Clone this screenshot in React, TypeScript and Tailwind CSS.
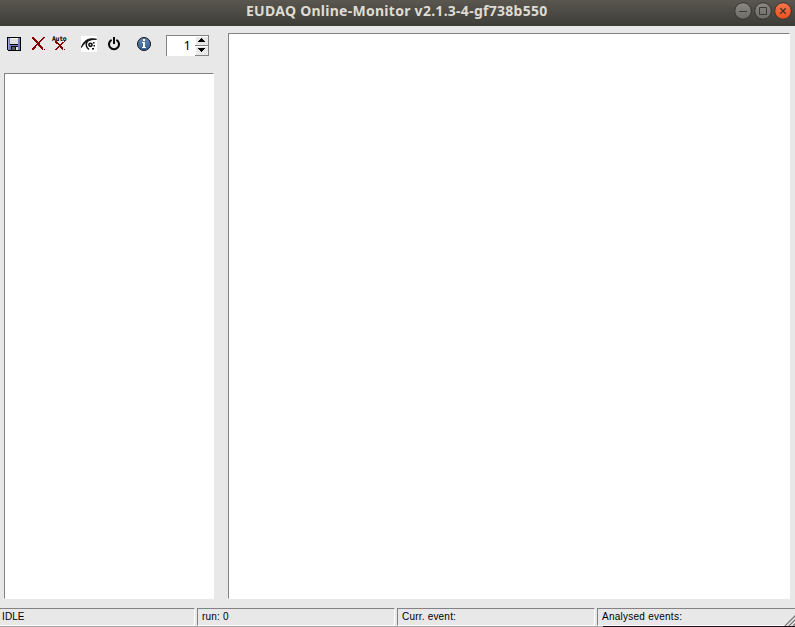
import React from "react";

function PixelArt({ rows, color }: { rows: string[]; color: string }) {
  const width = rows[0].length;
  return (
    <svg width={width} height={rows.length} viewBox={`0 0 ${width} ${rows.length}`} shapeRendering="crispEdges">
      {rows.map((row, y) =>
        [...row].map((cell, x) => (cell === "x" ? <rect key={`${x}-${y}`} x={x} y={y} width="1" height="1" fill={color} /> : null)),
      )}
    </svg>
  );
}

const CROSS = [
  "xx.........xx",
  "xxx.......xx.",
  ".xxx.....xx..",
  "..xxx...xx...",
  "...xxx.xx....",
  "....xxxx.....",
  ".....xxx.....",
  "....xxxx.....",
  "...xx.xxx....",
  "..xx...xxx...",
  ".xxx....xxx..",
  "xxx......xx..",
  "xx........x.x",
];

const SMALL_CROSS = [
  "xx.......x",
  "xxx....xx.",
  ".xxx..xx..",
  "...xxxx...",
  "....xx....",
  "...xxxx...",
  "..xx.xxx..",
  ".xx...xx..",
  "xx.....x.x",
];

function FloppyIcon() {
  return (
    <svg width="14" height="14" viewBox="0 0 14 14" shapeRendering="crispEdges">
      <path d="M0 0h14v14H1v-1H0z" fill="#000" />
      <path d="M1 1h2v7h8V1h2v12H1z" fill="#7478bd" />
      <path d="M1 1h1v11H1z" fill="#a0a3d8" />
      <path d="M3 1h8v6H3z" fill="#dededc" />
      <path d="M3 1h8v1H3z" fill="#f4f4f2" />
      <path d="M4 9h7v4H4z" fill="#111" />
      <path d="M9 10h2v3H9z" fill="#e4e4e0" />
      <path d="M5 10h3v3H5z" fill="#55585c" />
    </svg>
  );
}

function EyeIcon() {
  return (
    <svg width="16" height="16" viewBox="0 0 16 16" fill="none">
      <path d="M0 0h16v16H0z" fill="#fff" />
      <path d="M.3 11.500C2.500 4.800 7.500 1.300 15.500 3.300C9 3 4 6 .3 11.500z" fill="#111" stroke="#111" strokeWidth="1" />
      <path d="M6.300 5.500C4.600 8.500 5 11.800 8 13.300" stroke="#111" strokeWidth="1.500" />
      <circle cx="9.500" cy="8.800" r="1.600" stroke="#111" strokeWidth="1.600" />
      <path d="M12 6h1.500v1.500H12zM12.500 9h1.500v1.500h-1.500zM11 12h2v1.500h-2z" fill="#111" />
    </svg>
  );
}

function PowerIcon() {
  return (
    <svg width="12" height="14" viewBox="0 0 12 14" fill="none" stroke="#080808">
      <path d="M3.600 2.800A5 5 0 1 0 8.400 2.800" strokeWidth="2" />
      <path d="M6 0v7" strokeWidth="2" />
    </svg>
  );
}

function InfoIcon() {
  return (
    <svg width="14" height="14" viewBox="0 0 14 14">
      <defs>
        <linearGradient id="info" x1="0" y1="0" x2="0" y2="1">
          <stop offset="0" stopColor="#6785b0" />
          <stop offset="1" stopColor="#365f98" />
        </linearGradient>
      </defs>
      <circle cx="7" cy="7" r="6.500" fill="url(#info)" stroke="#10151d" />
      <path d="M6 2h2v2H6zM5 5h3v5h1v1H5v-1h1V6H5z" fill="#fff" shapeRendering="crispEdges" />
    </svg>
  );
}

function WindowButton({ kind }: { kind: "min" | "max" | "close" }) {
  const close = kind === "close";
  return (
    <svg width="18" height="18" viewBox="0 0 18 18" fill="none">
      <defs>
        <linearGradient id={kind} x1="0" y1="0" x2="0" y2="1">
          <stop offset="0" stopColor={close ? "#f4764d" : "#8b8981"} />
          <stop offset="1" stopColor={close ? "#e9511f" : "#6c6b65"} />
        </linearGradient>
      </defs>
      <circle cx="9" cy="9" r="8.300" fill={`url(#${kind})`} stroke="#35342f" />
      {kind === "min" && <path d="M5 9.500h8" stroke="#3c3b37" />}
      {kind === "max" && <path d="M5.500 5.500h7v7h-7z" stroke="#3c3b37" />}
      {close && <path d="M6.300 6.300l5.400 5.400M11.700 6.300l-5.400 5.400" stroke="#453027" strokeWidth="1.300" />}
    </svg>
  );
}

function TitleBar() {
  return (
    <header className="flex h-[26px] shrink-0 bg-linear-to-b from-[#59574f] to-[#3d3c37]">
      <h1 className="w-[734px] shrink-0 pl-[246px] font-['Noto_Sans','Open_Sans',sans-serif] text-[14px] leading-[22px] font-bold tracking-[0.27px] whitespace-nowrap text-[#dfdbd2]">
        EUDAQ Online-Monitor v2.1.3-4-gf738b550
      </h1>
      <div className="flex gap-[2px] pt-[2px]">
        <WindowButton kind="min" />
        <WindowButton kind="max" />
        <WindowButton kind="close" />
      </div>
    </header>
  );
}

function SpinButton({ down = false }: { down?: boolean }) {
  return (
    <div className="flex h-[10px] w-[14px] items-start justify-center border-r border-b border-[#848284] bg-[#e8e8e8] pt-[2px] shadow-[inset_1px_1px_0_#fff]">
      <svg width="7" height="4" viewBox="0 0 7 4" shapeRendering="crispEdges">
        <path
          d={down ? "M0 0h7v1H6v1H5v1H4v1H3V3H2V2H1V1H0z" : "M3 0h1v1h1v1h1v1h1v1H0V3h1V2h1V1h1z"}
          fill="#000"
        />
      </svg>
    </div>
  );
}

function Toolbar() {
  return (
    <div className="flex h-[30px] items-start pt-[2px] pl-[3px]">
      <div className="pt-[2px]"><FloppyIcon /></div>
      <div className="ml-[11px] pt-[2px]"><PixelArt rows={CROSS} color="#850004" /></div>
      <div className="ml-[7px] flex w-[15px] flex-col pt-[2px]">
        <span className="h-[4px] font-['DejaVu_Sans_Mono',monospace] text-[6.5px] leading-[5px] font-bold tracking-[-0.3px] text-black">Auto</span>
        <div className="pl-[3px]"><PixelArt rows={SMALL_CROSS} color="#850004" /></div>
      </div>
      <div className="ml-[14px] pt-px"><EyeIcon /></div>
      <div className="ml-[11px] pt-[2px]"><PowerIcon /></div>
      <div className="ml-[17px] pt-[2px]"><InfoIcon /></div>
      <div className="ml-[15px] flex h-[21px] w-[43px] border-t border-l border-[#848284] bg-white">
        <span className="w-[28px] pr-[4px] text-right font-['Noto_Sans','Open_Sans',sans-serif] text-[13px] leading-[18px] text-black">1</span>
        <div className="flex flex-col">
          <SpinButton />
          <SpinButton down />
        </div>
      </div>
    </div>
  );
}

function StatusCell({ label, className }: { label: string; className: string }) {
  return (
    <div
      className={`h-[18px] shrink-0 border-t border-r border-b border-t-[#848284] border-r-white border-b-white font-['Liberation_Sans',Arial,sans-serif] text-[10px] leading-[16px] whitespace-nowrap text-black ${className}`}
    >
      {label}
    </div>
  );
}

function StatusBar() {
  return (
    <footer className="flex h-[19px] shrink-0 flex-col">
      <div className="flex h-[18px] gap-[2px]">
        <StatusCell label="IDLE" className="w-[195px] pl-[2px] tracking-[0.1px]" />
        <StatusCell label="run: 0" className="w-[198px] border-l border-l-[#848284] pl-[4px] tracking-[0.2px]" />
        <StatusCell label="Curr. event:" className="w-[198px] border-l border-l-[#848284] pl-[4px] tracking-[0.2px]" />
        <div className="flex min-w-0 flex-1">
          <StatusCell label="Analysed events:" className="w-[187px] border-r-0 border-l border-l-[#848284] pl-[4px] tracking-[0.25px]" />
          <div className="flex flex-1 items-end border-t border-[#848284]">
            <svg width="11" height="11" viewBox="0 0 11 11" fill="none">
              <path d="M2 11L13 0M6 11L13 4M10 11L13 8" stroke="#fff" strokeWidth="1" />
              <path d="M1 11L12 0M5 11L12 4M9 11L12 8" stroke="#777" strokeWidth="1.300" />
            </svg>
          </div>
        </div>
      </div>
      <div className="flex h-px">
        <div className="w-[603px] bg-[#a5a4a5]" />
        <div className="flex-1 bg-[#210b1d]" />
      </div>
    </footer>
  );
}

export default function App() {
  return (
    <div className="flex h-[627px] w-[795px] flex-col overflow-hidden bg-[#e8e8e8]">
      <TitleBar />
      <main className="flex min-h-0 flex-1 gap-[14px] pt-[7px] pr-[5px] pb-[9px] pl-[4px]">
        <aside className="flex w-[210px] flex-col gap-[10px]">
          <Toolbar />
          <div className="flex-1 border border-t-[#848284] border-r-white border-b-white border-l-[#848284] bg-white" />
        </aside>
        <section className="flex-1 border border-t-[#848284] border-r-white border-b-white border-l-[#848284] bg-white" />
      </main>
      <StatusBar />
    </div>
  );
}
